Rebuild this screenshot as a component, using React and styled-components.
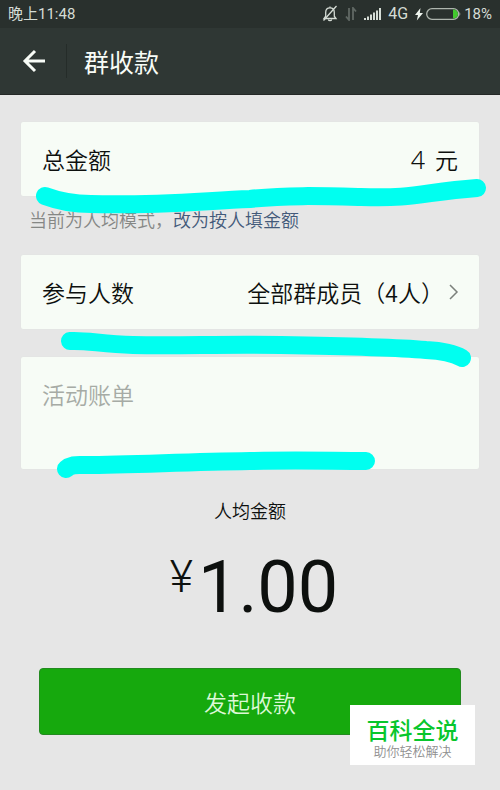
import React, { useState } from 'react';
import styled, { createGlobalStyle } from 'styled-components';

const GlobalStyle = createGlobalStyle`
  * { box-sizing: border-box; }
  body {
    margin: 0;
    background: #e6e6e6;
    font-family: 'Noto Sans CJK SC', 'Noto Sans', sans-serif;
    font-weight: 350;
    color: #0d100e;
  }
  button, input, textarea { font: inherit; color: inherit; }
`;

const Page = styled.div`
  position: relative;
  display: flex;
  flex-direction: column;
  min-height: 100vh;
  background: #e6e6e6;
`;

const StatusBar = styled.div`
  display: flex;
  align-items: center;
  justify-content: space-between;
  height: 28px;
  padding: 0 8px;
  background: #29302d;
  color: #d5dcd5;
  font-family: Roboto, 'Noto Sans CJK SC', sans-serif;
  font-weight: 400;
  font-size: 15px;
  line-height: 20px;
`;

const StatusIcons = styled.div`
  display: flex;
  align-items: center;
  gap: 7px;
`;

const Network = styled.span`
  font-size: 16px;
`;

const Battery = styled.div`
  display: flex;
  align-items: center;
  gap: 3px;
`;

const NavBar = styled.header`
  display: flex;
  align-items: center;
  height: 67px;
  padding: 0 20px;
  background: #2f3734;
  border-bottom: 1px solid #242826;
  color: #f8fcf7;
`;

const BackButton = styled.button`
  display: flex;
  padding: 0;
  border: 0;
  background: none;
  cursor: pointer;
`;

const NavDivider = styled.span`
  width: 1px;
  height: 34px;
  margin: 0 17px 0 19px;
  background: #252c29;
`;

const Title = styled.h1`
  margin: 0;
  font-size: 25px;
  font-weight: 400;
  line-height: 36px;
`;

const Content = styled.main`
  display: flex;
  flex-direction: column;
  padding: 27px 21px;
`;

const Card = styled.section`
  position: relative;
  display: flex;
  background: #f7fcf6;
  border-radius: 2px;
  box-shadow: 0 0 1px #d8dcd7;
  font-size: 23px;
  line-height: 36px;
`;

const AmountRow = styled.div`
  display: flex;
  flex: 1;
  align-items: center;
  justify-content: space-between;
  gap: 10px;
  min-width: 0;
  height: 74px;
  padding: 0 21px;
`;

const AmountInput = styled.input`
  flex: 1;
  width: 0;
  min-width: 0;
  padding: 0;
  border: 0;
  outline: 0;
  background: none;
  text-align: right;
  font-family: 'Noto Sans', sans-serif;
  font-size: 25px;
  font-weight: 300;
`;

const MembersButton = styled.button`
  display: flex;
  flex: 1;
  align-items: center;
  height: 74px;
  padding: 0 20px 0 21px;
  border: 0;
  background: none;
  text-align: left;
  cursor: pointer;
`;

const MembersValue = styled.span`
  flex: 1;
  margin-right: 5px;
  text-align: right;
`;

const NoteInput = styled.textarea`
  flex: 1;
  min-width: 0;
  height: 112px;
  padding: 19px 21px;
  border: 0;
  outline: 0;
  resize: none;
  background: none;
  &::placeholder { color: #a6aba5; opacity: 1; }
`;

const ModeHint = styled.p`
  margin: 10px 8px 22px;
  color: #858785;
  font-size: 18px;
  line-height: 27px;
`;

const ModeLink = styled.a`
  color: #435a7a;
  text-decoration: none;
`;

const Gap = styled.div`
  height: 28px;
`;

const Marker = styled.svg`
  position: absolute;
  left: 0;
  top: 0;
  z-index: 1;
  width: 100%;
  height: auto;
  overflow: visible;
  pointer-events: none;
  fill: none;
  stroke: #00fff0;
  stroke-width: 18;
  stroke-linecap: round;
  stroke-linejoin: round;
`;

const Summary = styled.div`
  display: flex;
  flex-direction: column;
  align-items: center;
  margin-top: 28px;
`;

const SummaryLabel = styled.div`
  font-size: 18px;
  line-height: 27px;
`;

const Total = styled.div`
  display: flex;
  align-items: flex-start;
  gap: 5px;
  margin: 24px 0 40px;
  padding-left: 8px;
  font-family: Roboto, sans-serif;
  font-weight: 400;
  font-size: 72px;
  line-height: 80px;
`;

const Currency = styled.span`
  font-size: 45px;
  font-weight: 300;
  line-height: 58px;
`;

const SubmitButton = styled.button`
  height: 67px;
  margin: 0 18px;
  padding: 0;
  border: 1px solid #238a20;
  border-radius: 4px;
  background: #16a90d;
  color: #dcf8d6;
  font-size: 23px;
  line-height: 36px;
  cursor: pointer;
`;

const Watermark = styled.aside`
  position: absolute;
  right: 25px;
  bottom: 25px;
  z-index: 2;
  display: flex;
  flex-direction: column;
  align-items: center;
  width: 125px;
  height: 60px;
  padding-top: 10px;
  background: #fff;
`;

const WatermarkName = styled.strong`
  color: #08c62c;
  font-size: 23px;
  font-weight: 500;
  line-height: 28px;
`;

const WatermarkSlogan = styled.span`
  color: #8f8f8f;
  font-size: 13px;
  line-height: 16px;
`;

function BellOff() {
  return (
    <svg width="16" height="18" viewBox="0 0 16 18" fill="none" stroke="currentColor" strokeWidth="1.3" aria-hidden="true">
      <path d="M2 13.5h12l-1.7-2.3V7.5c0-2.8-1.5-4.7-4.3-4.7S3.7 4.700 3.700 7.500v3.700z" />
      <path d="M6.300 14.500c.5 1.500 2.900 1.500 3.400 0M14.500 1 1.500 15.500M8 1.500v1.300" />
    </svg>
  );
}

function DataArrows() {
  return (
    <svg width="12" height="14" viewBox="0 0 12 14" fill="none" stroke="#606864" strokeWidth="1.8" aria-hidden="true">
      <path d="M4 1v12L1 9.500M8 13V1l3 3.500" />
    </svg>
  );
}

function Signal() {
  return (
    <svg width="17" height="12" viewBox="0 0 17 12" fill="currentColor" aria-hidden="true">
      <path d="M0 10h2v2H0zM3 8.500h2V12H3zM6 6.500h2V12H6zM9 4.500h2V12H9zM12 2.500h2V12h-2zM15 0h2v12h-2z" />
    </svg>
  );
}

function BatteryIcon() {
  return (
    <svg width="46" height="14" viewBox="0 0 46 14" aria-hidden="true">
      <path d="M5.500 1 0 8h3L1.800 13.500 8 6H4.800z" fill="#eef4ee" />
      <rect x="11.700" y="1.700" width="32" height="10.600" rx="5.300" fill="none" stroke="#aeb5ae" strokeWidth="1.300" />
      <path d="M38 2.500c2.800 0 5 2 5 4.500s-2.200 4.500-5 4.500z" fill="#42c82e" />
      <path d="M44.500 5c1 .8 1 3.200 0 4z" fill="#aeb5ae" />
    </svg>
  );
}

export default function App() {
  const [amount, setAmount] = useState('4');
  const [note, setNote] = useState('');

  return (
    <>
      <GlobalStyle />
      <Page>
        <StatusBar>
          <span>晚上11:48</span>
          <StatusIcons>
            <BellOff />
            <DataArrows />
            <Signal />
            <Network>4G</Network>
            <Battery>
              <BatteryIcon />
              <span>18%</span>
            </Battery>
          </StatusIcons>
        </StatusBar>
        <NavBar>
          <BackButton type="button" aria-label="返回">
            <svg width="27" height="24" viewBox="0 0 27 24" fill="none" stroke="currentColor" strokeWidth="3" aria-hidden="true">
              <path d="M25 12H5M15 2 5 12l10 10" />
            </svg>
          </BackButton>
          <NavDivider />
          <Title>群收款</Title>
        </NavBar>
        <Content>
          <Card>
            <AmountRow>
              <label htmlFor="amount">总金额</label>
              <AmountInput id="amount" inputMode="decimal" value={amount} onChange={(e) => setAmount(e.target.value)} />
              <span>元</span>
            </AmountRow>
            <Marker viewBox="0 0 458 74" aria-hidden="true">
              <path d="M24 74C40 80 52 82 70 82C130 84 180 79 229 77C265 73 300 74 340 75C395 77 402 70 456 66" />
            </Marker>
          </Card>
          <ModeHint>
            当前为人均模式，<ModeLink href="#by-person">改为按人填金额</ModeLink>
          </ModeHint>
          <Card>
            <MembersButton type="button">
              <span>参与人数</span>
              <MembersValue>全部群成员（4人）</MembersValue>
              <svg width="10" height="18" viewBox="0 0 10 18" fill="none" stroke="#7c807c" strokeWidth="1.500" aria-hidden="true">
                <path d="m1 2 7 7-7 7" />
              </svg>
            </MembersButton>
            <Marker viewBox="0 0 458 74" aria-hidden="true">
              <path d="M49 86C65 85 80 89 112 90C160 91 200 89 260 90C320 91 370 92 405 95C424 96 434 99 441 103" />
            </Marker>
          </Card>
          <Gap />
          <Card>
            <NoteInput aria-label="活动账单" placeholder="活动账单" value={note} onChange={(e) => setNote(e.target.value)} />
            <Marker viewBox="0 0 458 112" aria-hidden="true">
              <path d="M45 112C51 107 56 108 64 108C110 108 160 105 229 104C280 103 310 104 345 104" />
            </Marker>
          </Card>
          <Summary>
            <SummaryLabel>人均金额</SummaryLabel>
            <Total>
              <Currency>¥</Currency>
              <span>1.00</span>
            </Total>
          </Summary>
          <SubmitButton type="button">发起收款</SubmitButton>
        </Content>
        <Watermark>
          <WatermarkName>百科全说</WatermarkName>
          <WatermarkSlogan>助你轻松解决</WatermarkSlogan>
        </Watermark>
      </Page>
    </>
  );
}
